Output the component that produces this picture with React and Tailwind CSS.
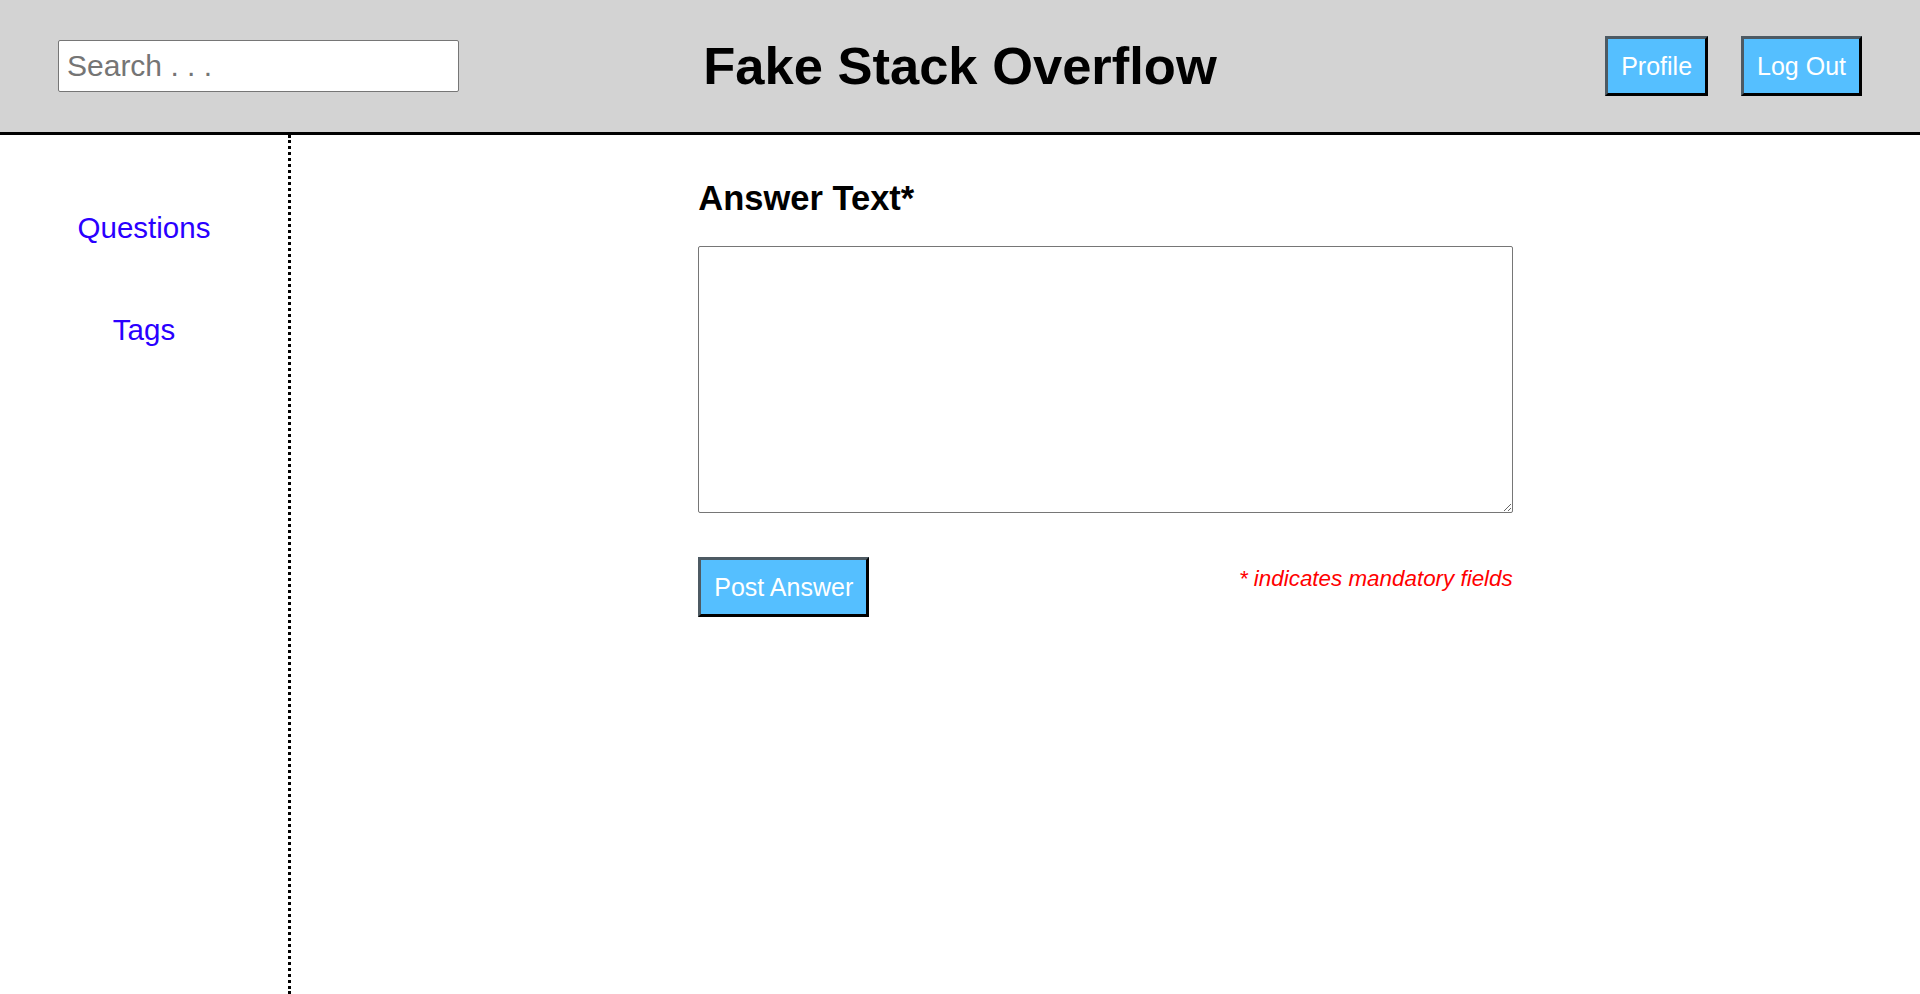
import React from 'react';

// Botón azul con borde tipo "outset"
const BlueButton = ({ children, className = '' }) => (
  <button
    className={`h-[60px] px-[13px] bg-[#55bfff] text-white text-[25px] leading-none border-[3px] border-t-[#4d5a63] border-l-[#4d5a63] border-b-black border-r-black ${className}`}
  >
    {children}
  </button>
);

const App = () => {
  return (
    <div className="min-h-[994px] flex flex-col bg-white font-['Liberation_Sans',Arial,sans-serif]">
      {/* Cabecera */}
      <header className="h-[135px] grid grid-cols-3 items-center bg-[#d3d3d3] border-b-[3px] border-black">
        <div className="pl-[58px]">
          <input
            type="text"
            placeholder="Search . . ."
            className="w-[401px] h-[52px] pl-[8px] bg-white text-[30px] text-black placeholder:text-[#757575] border border-[#767676] rounded-[2px] outline-none"
          />
        </div>
        <h1 className="text-center text-[52.5px] font-bold leading-[60px] text-black">
          Fake Stack Overflow
        </h1>
        <div className="flex justify-end gap-[33px] pr-[58px]">
          <BlueButton>Profile</BlueButton>
          <BlueButton>Log Out</BlueButton>
        </div>
      </header>

      <div className="flex flex-1">
        {/* Menú lateral */}
        <nav className="w-[291px] border-r-[3px] border-dotted border-black flex flex-col items-center pt-[76px] gap-[69px]">
          <a className="text-[29.5px] leading-[33px] text-[#2a00ff] cursor-pointer">Questions</a>
          <a className="text-[29.5px] leading-[33px] text-[#2a00ff] cursor-pointer">Tags</a>
        </nav>

        {/* Formulario de respuesta */}
        <main className="flex-1 flex justify-center">
          <div className="w-1/2 pt-[44px]">
            <h2 className="text-[34.5px] font-bold leading-[39px] text-black">Answer Text*</h2>
            <textarea className="block w-full h-[267px] mt-[28px] border border-[#767676] rounded-[2px] outline-none" />
            <div className="flex justify-between items-start mt-[44px]">
              <BlueButton className="h-[59px]">Post Answer</BlueButton>
              <span className="mt-[5px] text-[22.4px] italic text-[#ff0000]">* indicates mandatory fields</span>
            </div>
          </div>
        </main>
      </div>
    </div>
  );
};

export default App;
